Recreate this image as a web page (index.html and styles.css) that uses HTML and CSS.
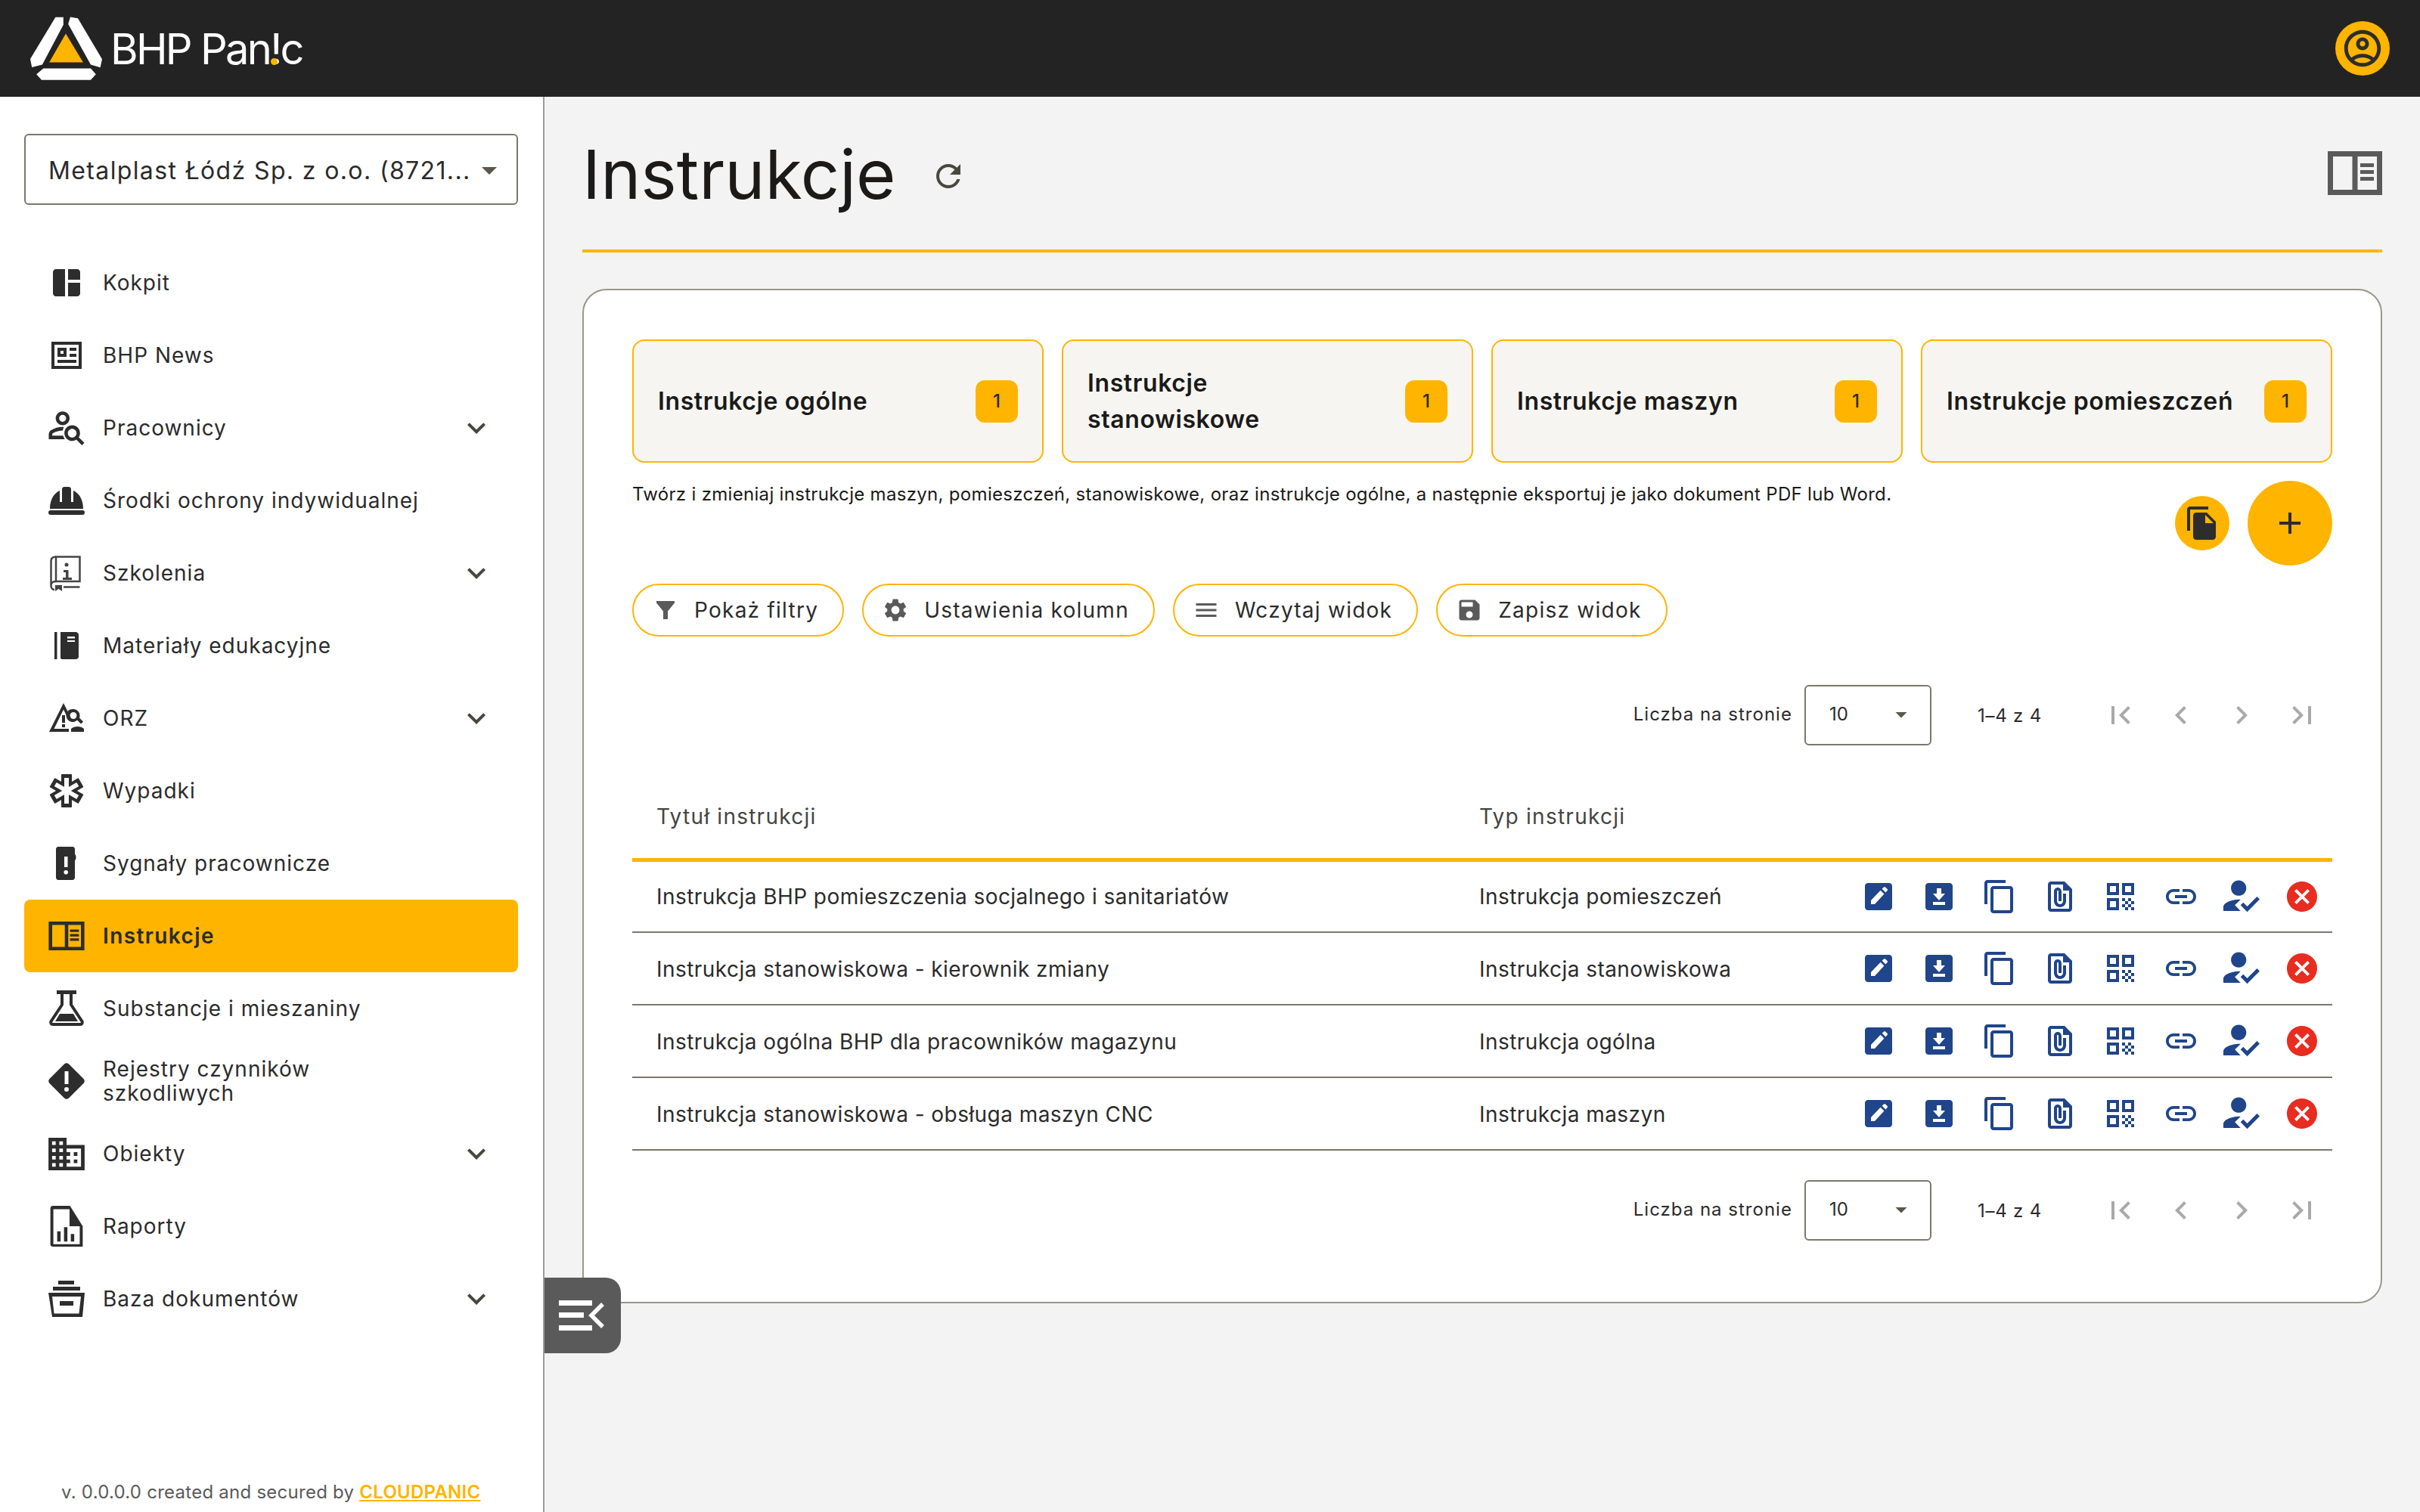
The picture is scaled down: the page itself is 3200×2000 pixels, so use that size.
FILE: index.html
```html
<!DOCTYPE html>
<html lang="pl">
  <head>
    <meta charset="UTF-8" />
    <meta name="viewport" content="width=device-width, initial-scale=1.0" />
    <title>BHP Panic - Instrukcje</title>
    <link rel="stylesheet" href="styles.css">
  </head>
  <body>
    <svg class="sprite" xmlns="http://www.w3.org/2000/svg">
      <symbol id="i-dashboard" viewBox="0 0 24 24"><path d="M11 21H5c-1.1 0-2-.9-2-2V5c0-1.1.9-2 2-2h6v18zm2 0h6c1.1 0 2-.9 2-2v-7h-8v9zm8-11V5c0-1.1-.9-2-2-2h-6v7h8z"/></symbol>
      <symbol id="i-news" viewBox="0 0 24 24"><path fill-rule="evenodd" d="M2 3h20v18H2zM4 5v14h16V5zM6 7h6v6H6zM8 9v2h2V9zM14 7h4.500v2H14zM14 11h4.500v2H14zM6 15h12.500v2H6z"/></symbol>
      <symbol id="i-person-search" viewBox="1.800 3.050 20.900 20.900"><path d="M4 18v-.65c0-.34.16-.66.41-.81C6.100 15.530 8.030 15 10 15c.03 0 .05 0 .08.01.1-.7.3-1.370.59-1.980-.22-.02-.44-.03-.67-.03-2.420 0-4.680.67-6.610 1.820-.88.52-1.390 1.500-1.390 2.530V20h9.260c-.42-.6-.75-1.280-.97-2H4z"/><path d="M10 12c2.210 0 4-1.790 4-4s-1.790-4-4-4-4 1.790-4 4 1.790 4 4 4zm0-6c1.100 0 2 .9 2 2s-.9 2-2 2-2-.9-2-2 .9-2 2-2z"/><path d="M19.300 18.900c.4-.7.7-1.500.7-2.400 0-2.500-2-4.500-4.500-4.500S11 14 11 16.500s2 4.500 4.500 4.500c.9 0 1.700-.3 2.400-.7l3.200 3.200 1.400-1.400-3.200-3.200zm-3.800.1c-1.400 0-2.500-1.100-2.500-2.500s1.100-2.500 2.500-2.500 2.500 1.100 2.500 2.500-1.100 2.500-2.500 2.500z"/></symbol>
      <symbol id="i-helmet" viewBox="0 0 24 24"><path d="M1 17.500C1 11 4 7 7.500 5.500V13h1.500V4.500C9 3.600 9.800 3 10.500 3h3c.7 0 1.500.6 1.500 1.500V13h1.500V5.500C20 7 23 11 23 17.500z"/><rect x="0" y="18.500" width="24" height="3" rx="1.500"/></symbol>
      <symbol id="i-book-info" viewBox="0 0 48 48"><g fill="none" stroke="currentColor" stroke-width="2.500"><path d="M10 2.500h31.500V35H10z"/><path d="M10 2.500C6 2.500 3.500 4.500 3.500 8v33c0 3 2 5 4.500 5"/><path d="M3.500 39c1-3 3-4 6.500-4M20 42.500h21.500"/></g><circle cx="24" cy="13" r="2.500"/><path d="M20 20h6.500v10H31v3H19v-3h4v-7h-3zM9 40h9v8l-4.500-3L9 48z"/></symbol>
      <symbol id="i-book" viewBox="0 0 48 48"><path d="M8 6h3.500v36H8z"/><path fill-rule="evenodd" d="M16 6h20c2 0 4 2 4 3.500V39c0 1.500-2 3-4 3H18c-1 0-2-1-2-2zM25 12v2.500h10V12zM25 17v2h10v-2z"/></symbol>
      <symbol id="i-orz" viewBox="0 0 48 48"><path fill-rule="evenodd" d="M20 4L1 42h26v-4H7.500L20 12.500l6 12.500 3.500-2zM18 20h4v10h-4zM18 32h4v4h-4z"/><path fill-rule="evenodd" d="M33 12a8.500 8.500 0 0 1 8 11.500l5 5-3 3-5-5A8.500 8.500 0 1 1 33 12zm0 4a4.500 4.500 0 1 0 0 9 4.500 4.500 0 0 0 0-9z"/><path d="M30 42h17v-4c-4-4-13-4-17 0z"/></symbol>
      <symbol id="i-star" viewBox="0 0 48 48"><g fill="#2d2d2d"><rect x="17" y="2" width="14" height="44" rx="1"/><rect x="17" y="2" width="14" height="44" rx="1" transform="rotate(60 24 24)"/><rect x="17" y="2" width="14" height="44" rx="1" transform="rotate(120 24 24)"/></g><g fill="#fff"><rect x="21" y="7" width="6" height="34"/><rect x="21" y="7" width="6" height="34" transform="rotate(60 24 24)"/><rect x="21" y="7" width="6" height="34" transform="rotate(120 24 24)"/></g></symbol>
      <symbol id="i-signal" viewBox="0 0 48 48"><path fill-rule="evenodd" d="M13 2h19c1.500 0 3 1.500 3 3v7c2 1 2 7 0 8v23c0 1.500-1.500 3-3 3H13c-1.500 0-3-1.500-3-3V5c0-1.500 1.500-3 3-3zM21 15v14h4.500V15zM23.200 33a2.800 2.800 0 1 0 0 5.600 2.800 2.800 0 0 0 0-5.600z"/></symbol>
      <symbol id="i-panel" viewBox="0 0 72 58"><path fill-rule="evenodd" d="M0 0h72v58H0zM7 7v44h25.500V7zM39.500 7v44H65V7zM43 16v5h18v-5zM43 25v5h18v-5zM43 34v5h18v-5z"/></symbol>
      <symbol id="i-flask" viewBox="0 0 48 48"><path d="M11 0h26v5H11z"/><path fill="none" stroke="currentColor" stroke-width="4" stroke-linejoin="round" d="M18 5v14L3.500 41c-1 2 0 4 2.500 4h36c2.500 0 3.500-2 2.500-4L30 19V5"/><path d="M15 31h18l6 10H9z"/></symbol>
      <symbol id="i-diamond" viewBox="0 0 48 48"><path fill-rule="evenodd" d="M21 1.500c1.700-1.700 4.300-1.700 6 0l19.500 19.500c1.700 1.700 1.700 4.300 0 6L27 46.500c-1.700 1.700-4.300 1.700-6 0L1.500 27c-1.700-1.700-1.700-4.300 0-6zM21.500 11v17h5V11zM24 32a3 3 0 1 0 0 6 3 3 0 0 0 0-6z"/></symbol>
      <symbol id="i-domain" viewBox="2 3 20 18"><path d="M12 7V3H2v18h20V7H12zM6 19H4v-2h2v2zm0-4H4v-2h2v2zm0-4H4V9h2v2zm0-4H4V5h2v2zm4 12H8v-2h2v2zm0-4H8v-2h2v2zm0-4H8V9h2v2zm0-4H8V5h2v2zm10 12h-8v-2h2v-2h-2v-2h2v-2h-2V9h8v10zm-2-8h-2v2h2v-2zm0 4h-2v2h2v-2z"/></symbol>
      <symbol id="i-report" viewBox="0 0 48 48"><path fill-rule="evenodd" d="M7 0h20l15 24v24H7c-2 0-3-1.500-3-3V3c0-1.500 1-3 3-3zM7.500 24v21h31V24h-12V4H7.500zM12 30h4v12h-4zM20 25h4v17h-4zM28 33h4v9h-4z" transform="translate(1 0)"/></symbol>
      <symbol id="i-archive" viewBox="0 0 48 48"><path d="M13 0h21v5H13zM6 8h36v5H6z"/><path fill-rule="evenodd" d="M0 16h48l-3 32H5zM5 21l2.500 22.500h33L43 21zM15 27h18v6H15z"/></symbol>
      <symbol id="i-expand" viewBox="0 0 24 24"><path d="M16.590 8.590L12 13.170 7.410 8.590 6 10l6 6 6-6z"/></symbol>
      <symbol id="i-drop" viewBox="0 0 24 24"><path d="M7 10l5 5 5-5z"/></symbol>
      <symbol id="i-account" viewBox="0 0 24 24"><path d="M12 2C6.480 2 2 6.480 2 12s4.480 10 10 10 10-4.480 10-10S17.520 2 12 2zM7.350 18.500C8.660 17.560 10.260 17 12 17s3.340.56 4.650 1.500C15.340 19.440 13.740 20 12 20s-3.340-.56-4.650-1.500zm10.790-1.380C16.450 15.800 14.320 15 12 15s-4.450.8-6.140 2.120C4.700 15.730 4 13.950 4 12c0-4.420 3.580-8 8-8s8 3.580 8 8c0 1.950-.7 3.730-1.860 5.120z"/><path d="M12 6c-1.930 0-3.500 1.570-3.500 3.500S10.070 13 12 13s3.500-1.570 3.500-3.500S13.930 6 12 6zm0 5c-.83 0-1.500-.67-1.500-1.500S11.170 8 12 8s1.500.67 1.500 1.500S12.830 11 12 11z"/></symbol>
      <symbol id="i-refresh" viewBox="0 0 24 24"><path d="M17.650 6.350C16.200 4.900 14.210 4 12 4c-4.420 0-7.990 3.580-7.990 8s3.570 8 7.990 8c3.730 0 6.840-2.550 7.730-6h-2.080c-.82 2.330-3.040 4-5.650 4-3.310 0-6-2.690-6-6s2.690-6 6-6c1.660 0 3.140.69 4.220 1.780L13 11h7V4l-2.350 2.350z"/></symbol>
      <symbol id="i-file-copy" viewBox="0 0 24 24"><path d="M16 1H4c-1.100 0-2 .9-2 2v14h2V3h12V1zm-1 4l6 6v10c0 1.100-.9 2-2 2H7.990C6.890 23 6 22.100 6 21l.01-14c0-1.100.89-2 1.990-2h7zm-1 7h5.500L14 6.500V12z"/></symbol>
      <symbol id="i-add" viewBox="0 0 24 24"><path d="M19 13h-6v6h-2v-6H5v-2h6V5h2v6h6v2z"/></symbol>
      <symbol id="i-filter" viewBox="0 0 24 24"><path d="M4 4h16v1.600L14 13v7h-4v-7L4 5.600z"/></symbol>
      <symbol id="i-gear" viewBox="0 0 24 24"><path d="M19.140 12.940c.04-.3.06-.61.06-.94 0-.32-.02-.64-.07-.94l2.030-1.580c.18-.14.23-.41.12-.61l-1.920-3.320c-.12-.22-.37-.29-.59-.22l-2.390.96c-.5-.38-1.030-.7-1.620-.94l-.36-2.540c-.04-.24-.24-.41-.48-.41h-3.840c-.24 0-.43.17-.47.41l-.36 2.540c-.59.24-1.130.57-1.620.94l-2.390-.96c-.22-.08-.47 0-.59.22L2.740 8.870c-.12.21-.08.47.12.61l2.030 1.580c-.05.3-.09.63-.09.94s.02.64.07.94l-2.030 1.580c-.18.14-.23.41-.12.61l1.920 3.320c.12.22.37.29.59.22l2.390-.96c.5.38 1.030.7 1.620.94l.36 2.540c.05.24.24.41.48.41h3.840c.24 0 .44-.17.47-.41l.36-2.540c.59-.24 1.130-.56 1.620-.94l2.390.96c.22.08.47 0 .59-.22l1.920-3.320c.12-.22.07-.47-.12-.61l-2.010-1.580zM12 15.600c-1.980 0-3.600-1.620-3.600-3.600s1.620-3.600 3.600-3.600 3.600 1.620 3.600 3.600-1.620 3.600-3.600 3.600z"/></symbol>
      <symbol id="i-menu" viewBox="0 0 24 24"><path d="M3 18h18v-2H3v2zm0-5h18v-2H3v2zm0-7v2h18V6H3z"/></symbol>
      <symbol id="i-save" viewBox="0 0 24 24"><path d="M17 3H5c-1.110 0-2 .9-2 2v14c0 1.100.89 2 2 2h14c1.100 0 2-.9 2-2V7l-4-4zm-5 16c-1.660 0-3-1.340-3-3s1.340-3 3-3 3 1.340 3 3-1.340 3-3 3zm3-10H5V5h10v4z"/></symbol>
      <symbol id="i-first" viewBox="0 0 24 24"><path d="M18.410 16.590L13.820 12l4.590-4.590L17 6l-6 6 6 6zM6 6h2v12H6z"/></symbol>
      <symbol id="i-prev" viewBox="0 0 24 24"><path d="M15.410 7.410L14 6l-6 6 6 6 1.410-1.410L10.830 12z"/></symbol>
      <symbol id="i-next" viewBox="0 0 24 24"><path d="M10 6L8.590 7.410 13.170 12l-4.580 4.590L10 18l6-6z"/></symbol>
      <symbol id="i-last" viewBox="0 0 24 24"><path d="M5.590 7.410L10.180 12l-4.590 4.590L7 18l6-6-6-6zM16 6h2v12h-2z"/></symbol>
      <symbol id="i-edit" viewBox="0 0 24 24"><path fill-rule="evenodd" d="M5 3h14c1.100 0 2 .9 2 2v14c0 1.100-.9 2-2 2H5c-1.100 0-2-.9-2-2V5c0-1.100.9-2 2-2zM7 14.500V17h2.500l6.200-6.800-2.400-2.300zM14.300 6.900l2.400 2.300 1.100-1.200c.3-.3.3-.7 0-1l-1.300-1.200c-.3-.3-.7-.3-1 0z"/></symbol>
      <symbol id="i-download" viewBox="0 0 24 24"><path fill-rule="evenodd" d="M5 3h14c1.100 0 2 .9 2 2v14c0 1.100-.9 2-2 2H5c-1.100 0-2-.9-2-2V5c0-1.100.9-2 2-2zM10.500 6.500V10H8l4 4.500 4-4.500h-2.500V6.500zM8 15.500V17.500h8v-2z"/></symbol>
      <symbol id="i-copy" viewBox="0 0 24 24"><path d="M16 1H4c-1.100 0-2 .9-2 2v14h2V3h12V1zm3 4H8c-1.100 0-2 .9-2 2v14c0 1.100.9 2 2 2h11c1.100 0 2-.9 2-2V7c0-1.100-.9-2-2-2zm0 16H8V7h11v14z"/></symbol>
      <symbol id="i-attach" viewBox="0 0 24 24"><path d="M15 2H6c-1.100 0-2 .9-2 2v16c0 1.100.9 2 2 2h12c1.100 0 2-.9 2-2V7l-5-5zM6 20V4h8v4h4v12H6zm10-10v5c0 2.210-1.790 4-4 4s-4-1.790-4-4V8.500c0-1.470 1.260-2.640 2.760-2.490 1.300.13 2.240 1.320 2.240 2.630V15h-2V8.500c0-.28-.22-.5-.5-.5s-.5.22-.5.5V15c0 1.100.9 2 2 2s2-.9 2-2v-5h2z"/></symbol>
      <symbol id="i-qr" viewBox="0 0 24 24"><path d="M3 11h8V3H3v8zm2-6h4v4H5V5zM3 21h8v-8H3v8zm2-6h4v4H5v-4zM13 3v8h8V3h-8zm6 6h-4V5h4v4zM13 13h2v2h-2zM15 15h2v2h-2zM13 17h2v2h-2zM15 19h2v2h-2zM17 17h2v2h-2zM17 13h2v2h-2zM19 15h2v2h-2zM19 19h2v2h-2z"/></symbol>
      <symbol id="i-link" viewBox="0 0 24 24"><path d="M3.900 12c0-1.710 1.390-3.100 3.100-3.100h4V7H7c-2.760 0-5 2.240-5 5s2.240 5 5 5h4v-1.900H7c-1.710 0-3.100-1.390-3.100-3.100zM8 13h8v-2H8v2zm9-6h-4v1.900h4c1.710 0 3.100 1.390 3.100 3.100s-1.390 3.100-3.100 3.100h-4V17h4c2.760 0 5-2.240 5-5s-2.240-5-5-5z"/></symbol>
      <symbol id="i-reg" viewBox="3 3 19 19"><path d="M9 17l3-2.940c-.39-.04-.68-.06-1-.06-2.670 0-8 1.340-8 4v2h9l-3-3zm2-5c2.210 0 4-1.790 4-4s-1.790-4-4-4-4 1.790-4 4 1.790 4 4 4z"/><path d="M15.470 20.500L12 17l1.400-1.410 2.070 2.080 5.130-5.170 1.400 1.410z"/></symbol>
      <symbol id="i-cancel" viewBox="0 0 24 24"><path d="M12 2C6.470 2 2 6.470 2 12s4.470 10 10 10 10-4.470 10-10S17.530 2 12 2zm5 13.590L15.590 17 12 13.410 8.410 17 7 15.590 10.590 12 7 8.410 8.410 7 12 10.590 15.590 7 17 8.410 13.410 12 17 15.590z"/></symbol>
    </svg>

    <header class="topbar">
      <a class="logo">
        <svg class="logo-mark" viewBox="0 0 95.400 84">
          <path fill="#fff" d="M44 .7H33.500L0 56l2.200 11L16 63.700 44 10.700zM50.400 9.700L53.200.3 63.300 2l32.100 54.300-2.400 11-12.700-3.600zM8.200 76.300l9.200-7.600h62.900l6.900 7.600-6.900 7.700H15z"/>
          <path fill="#ffb400" d="M47.200 22.300l23 38.400h-45z"/>
        </svg>
        <span class="logo-text">BHP Pan<span class="logo-bang">!</span>c</span>
      </a>
      <button class="avatar"><svg class="icon"><use href="#i-account"/></svg></button>
    </header>

    <div class="layout">
      <aside class="sidebar">
        <div class="company-select">
          <span class="company-name">Metalplast Łódź Sp. z o.o. (8721...</span>
          <svg class="icon drop"><use href="#i-drop"/></svg>
        </div>

        <nav class="nav">
          <a class="nav-item"><span class="nav-icon"><svg class="i48"><use href="#i-dashboard"/></svg></span><span class="nav-label">Kokpit</span></a>
          <a class="nav-item"><span class="nav-icon"><svg class="i48"><use href="#i-news"/></svg></span><span class="nav-label">BHP News</span></a>
          <a class="nav-item"><span class="nav-icon"><svg class="i48"><use href="#i-person-search"/></svg></span><span class="nav-label">Pracownicy</span><svg class="i48 chevron"><use href="#i-expand"/></svg></a>
          <a class="nav-item"><span class="nav-icon"><svg class="i48"><use href="#i-helmet"/></svg></span><span class="nav-label">Środki ochrony indywidualnej</span></a>
          <a class="nav-item"><span class="nav-icon"><svg class="i48 book-info"><use href="#i-book-info"/></svg></span><span class="nav-label">Szkolenia</span><svg class="i48 chevron"><use href="#i-expand"/></svg></a>
          <a class="nav-item"><span class="nav-icon"><svg class="i48"><use href="#i-book"/></svg></span><span class="nav-label">Materiały edukacyjne</span></a>
          <a class="nav-item"><span class="nav-icon"><svg class="i48"><use href="#i-orz"/></svg></span><span class="nav-label">ORZ</span><svg class="i48 chevron"><use href="#i-expand"/></svg></a>
          <a class="nav-item"><span class="nav-icon"><svg class="i48"><use href="#i-star"/></svg></span><span class="nav-label">Wypadki</span></a>
          <a class="nav-item"><span class="nav-icon"><svg class="i48"><use href="#i-signal"/></svg></span><span class="nav-label">Sygnały pracownicze</span></a>
          <a class="nav-item active"><span class="nav-icon"><svg class="i48 panel-small"><use href="#i-panel"/></svg></span><span class="nav-label">Instrukcje</span></a>
          <a class="nav-item"><span class="nav-icon"><svg class="i48"><use href="#i-flask"/></svg></span><span class="nav-label">Substancje i mieszaniny</span></a>
          <a class="nav-item"><span class="nav-icon"><svg class="i48"><use href="#i-diamond"/></svg></span><span class="nav-label">Rejestry czynników szkodliwych</span></a>
          <a class="nav-item"><span class="nav-icon"><svg class="i48 domain"><use href="#i-domain"/></svg></span><span class="nav-label">Obiekty</span><svg class="i48 chevron"><use href="#i-expand"/></svg></a>
          <a class="nav-item"><span class="nav-icon"><svg class="report"><use href="#i-report"/></svg></span><span class="nav-label">Raporty</span></a>
          <a class="nav-item"><span class="nav-icon"><svg class="i48"><use href="#i-archive"/></svg></span><span class="nav-label">Baza dokumentów</span><svg class="i48 chevron"><use href="#i-expand"/></svg></a>
        </nav>

        <p class="version">v. 0.0.0.0 created and secured by <a class="version-link">CLOUDPANIC</a></p>
      </aside>

      <main class="content">
        <div class="page-head">
          <h1 class="page-title">Instrukcje</h1>
          <svg class="i48 refresh"><use href="#i-refresh"/></svg>
          <svg class="panel-large"><use href="#i-panel"/></svg>
        </div>

        <section class="card">
          <div class="tiles">
            <div class="tile"><span class="tile-name">Instrukcje ogólne</span><span class="badge">1</span></div>
            <div class="tile"><span class="tile-name">Instrukcje stanowiskowe</span><span class="badge">1</span></div>
            <div class="tile"><span class="tile-name">Instrukcje maszyn</span><span class="badge">1</span></div>
            <div class="tile"><span class="tile-name">Instrukcje pomieszczeń</span><span class="badge">1</span></div>
          </div>

          <div class="intro">
            <p class="intro-text">Twórz i zmieniaj instrukcje maszyn, pomieszczeń, stanowiskowe, oraz instrukcje ogólne, a następnie eksportuj je jako dokument PDF lub Word.</p>
            <div class="fabs">
              <button class="fab fab-small"><svg class="i48"><use href="#i-file-copy"/></svg></button>
              <button class="fab fab-large"><svg class="i48"><use href="#i-add"/></svg></button>
            </div>
          </div>

          <div class="toolbar">
            <button class="pill"><svg class="i36"><use href="#i-filter"/></svg>Pokaż filtry</button>
            <button class="pill"><svg class="i36"><use href="#i-gear"/></svg>Ustawienia kolumn</button>
            <button class="pill"><svg class="i36"><use href="#i-menu"/></svg>Wczytaj widok</button>
            <button class="pill"><svg class="i36"><use href="#i-save"/></svg>Zapisz widok</button>
          </div>

          <div class="pager">
            <span class="pager-label">Liczba na stronie</span>
            <div class="pager-select"><span>10</span><svg class="i36"><use href="#i-drop"/></svg></div>
            <span class="pager-range">1–4 z 4</span>
            <span class="pager-btn"><svg class="i48"><use href="#i-first"/></svg></span>
            <span class="pager-btn"><svg class="i48"><use href="#i-prev"/></svg></span>
            <span class="pager-btn"><svg class="i48"><use href="#i-next"/></svg></span>
            <span class="pager-btn"><svg class="i48"><use href="#i-last"/></svg></span>
          </div>

          <table class="grid">
            <colgroup><col class="col-title"><col class="col-type"><col></colgroup>
            <thead>
              <tr><th>Tytuł instrukcji</th><th>Typ instrukcji</th><th></th></tr>
            </thead>
            <tbody>
              <tr>
                <td>Instrukcja BHP pomieszczenia socjalnego i sanitariatów</td>
                <td>Instrukcja pomieszczeń</td>
                <td><div class="actions"><svg class="i48"><use href="#i-edit"/></svg><svg class="i48"><use href="#i-download"/></svg><svg class="i48"><use href="#i-copy"/></svg><svg class="i48"><use href="#i-attach"/></svg><svg class="i48"><use href="#i-qr"/></svg><svg class="i48"><use href="#i-link"/></svg><svg class="i48"><use href="#i-reg"/></svg><svg class="i48 danger"><use href="#i-cancel"/></svg></div></td>
              </tr>
              <tr>
                <td>Instrukcja stanowiskowa - kierownik zmiany</td>
                <td>Instrukcja stanowiskowa</td>
                <td><div class="actions"><svg class="i48"><use href="#i-edit"/></svg><svg class="i48"><use href="#i-download"/></svg><svg class="i48"><use href="#i-copy"/></svg><svg class="i48"><use href="#i-attach"/></svg><svg class="i48"><use href="#i-qr"/></svg><svg class="i48"><use href="#i-link"/></svg><svg class="i48"><use href="#i-reg"/></svg><svg class="i48 danger"><use href="#i-cancel"/></svg></div></td>
              </tr>
              <tr>
                <td>Instrukcja ogólna BHP dla pracowników magazynu</td>
                <td>Instrukcja ogólna</td>
                <td><div class="actions"><svg class="i48"><use href="#i-edit"/></svg><svg class="i48"><use href="#i-download"/></svg><svg class="i48"><use href="#i-copy"/></svg><svg class="i48"><use href="#i-attach"/></svg><svg class="i48"><use href="#i-qr"/></svg><svg class="i48"><use href="#i-link"/></svg><svg class="i48"><use href="#i-reg"/></svg><svg class="i48 danger"><use href="#i-cancel"/></svg></div></td>
              </tr>
              <tr>
                <td>Instrukcja stanowiskowa - obsługa maszyn CNC</td>
                <td>Instrukcja maszyn</td>
                <td><div class="actions"><svg class="i48"><use href="#i-edit"/></svg><svg class="i48"><use href="#i-download"/></svg><svg class="i48"><use href="#i-copy"/></svg><svg class="i48"><use href="#i-attach"/></svg><svg class="i48"><use href="#i-qr"/></svg><svg class="i48"><use href="#i-link"/></svg><svg class="i48"><use href="#i-reg"/></svg><svg class="i48 danger"><use href="#i-cancel"/></svg></div></td>
              </tr>
            </tbody>
          </table>

          <div class="pager pager-bottom">
            <span class="pager-label">Liczba na stronie</span>
            <div class="pager-select"><span>10</span><svg class="i36"><use href="#i-drop"/></svg></div>
            <span class="pager-range">1–4 z 4</span>
            <span class="pager-btn"><svg class="i48"><use href="#i-first"/></svg></span>
            <span class="pager-btn"><svg class="i48"><use href="#i-prev"/></svg></span>
            <span class="pager-btn"><svg class="i48"><use href="#i-next"/></svg></span>
            <span class="pager-btn"><svg class="i48"><use href="#i-last"/></svg></span>
          </div>
        </section>

        <button class="side-toggle">
          <svg viewBox="0 0 60 40"><path fill="#fff" d="M0 0h44v7H0zM0 16h33v7H0zM0 33h44v7H0z"/><path fill="none" stroke="#fff" stroke-width="5.500" d="M58 5L43 20l15 15"/></svg>
        </button>
      </main>
    </div>
  </body>
</html>
```

FILE: styles.css
```css
* {
  box-sizing: border-box;
}

body {
  margin: 0;
  height: 2000px;
  display: flex;
  flex-direction: column;
  overflow: hidden;
  font-family: "Inter", "Noto Sans", sans-serif;
  color: #2b2b2b;
  background: #f3f3f3;
}

.sprite {
  display: none;
}

svg {
  fill: currentColor;
  flex: none;
  display: block;
}

.i48 {
  width: 48px;
  height: 48px;
}
.i36 {
  width: 36px;
  height: 36px;
}

button {
  font: inherit;
  color: inherit;
  background: none;
  border: 0;
  padding: 0;
}

/* top bar */
.topbar {
  height: 128px;
  flex: none;
  background: #232323;
  display: flex;
  align-items: center;
  justify-content: space-between;
  padding: 0 40px;
}
.logo {
  display: flex;
  align-items: center;
  gap: 11px;
}
.logo-mark {
  width: 95px;
  height: 84px;
}
.logo-text {
  color: #fff;
  font-size: 56px;
  font-weight: 400;
  letter-spacing: -2.7px;
  line-height: 64px;
  padding-top: 2px;
}
.logo-bang {
  position: relative;
}
.logo-bang::after {
  content: "";
  position: absolute;
  left: 50%;
  bottom: 13px;
  width: 9px;
  height: 9px;
  margin-left: -6px;
  border-radius: 50%;
  background: #ffb400;
}
.avatar {
  width: 72px;
  height: 72px;
  border-radius: 50%;
  background: #ffb400;
  color: #2d2d2d;
  display: flex;
  align-items: center;
  justify-content: center;
}
.avatar .icon {
  width: 58px;
  height: 58px;
}

.layout {
  flex: 1;
  display: flex;
  min-height: 0;
}

/* sidebar */
.sidebar {
  width: 720px;
  flex: none;
  background: #fff;
  border-right: 2px solid #9b9b9b;
  padding: 49px 33px 0 32px;
  display: flex;
  flex-direction: column;
}
.company-select {
  height: 94px;
  border: 2px solid #7b776b;
  border-radius: 6px;
  display: flex;
  align-items: center;
  justify-content: space-between;
  padding: 2px 30px 0 30px;
  font-size: 32px;
  letter-spacing: 1.37px;
}
.company-name {
  white-space: nowrap;
}
.company-select .drop {
  width: 48px;
  height: 48px;
  color: #5a564a;
}
.nav {
  margin-top: 55px;
  display: flex;
  flex-direction: column;
}
.nav-item {
  height: 96px;
  padding: 0 32px;
  display: flex;
  align-items: center;
  border-radius: 8px;
  font-size: 28px;
  letter-spacing: 1px;
  line-height: 32px;
}
.nav-item.active {
  background: #ffb400;
  font-weight: 600;
  letter-spacing: 1.4px;
}
.nav-icon {
  width: 48px;
  height: 48px;
  margin-right: 24px;
  flex: none;
  display: flex;
  align-items: center;
  justify-content: center;
  color: #2d2d2d;
}
.nav-label {
  max-width: 430px;
}
.chevron {
  margin-left: auto;
  margin-right: -1px;
  color: #4a463e;
}
.panel-small {
  height: 38px;
}
.book-info {
  color: #444;
}
.domain {
  height: 43px;
}
.report {
  width: 54px;
  height: 54px;
}
.version {
  margin: auto 0 10px;
  padding-left: 49px;
  font-size: 24px;
  line-height: 32px;
  letter-spacing: .25px;
  color: #5a5a5a;
  white-space: nowrap;
}
.version-link {
  color: #ffb400;
  font-weight: 600;
  text-decoration: underline;
}

/* main */
.content {
  flex: 1;
  min-width: 0;
  padding: 0 50px;
  position: relative;
}
.page-head {
  height: 206px;
  border-bottom: 4px solid #ffb400;
  display: flex;
  align-items: center;
  padding-top: 4px;
}
.page-title {
  margin: 0;
  font-size: 90px;
  font-weight: 400;
  line-height: 112px;
  color: #1b1a18;
}
.refresh {
  margin: 3px 0 0 46px;
  color: #4a463e;
}
.panel-large {
  margin-left: auto;
  margin-top: -4px;
  width: 72px;
  height: 58px;
  color: #5a5a5a;
}

.card {
  margin-top: 48px;
  height: 1342px;
  background: #fff;
  border: 2px solid #9a968a;
  border-radius: 32px;
  padding: 65px 64px 0;
}
.tiles {
  display: grid;
  grid-template-columns: repeat(4, 1fr);
  gap: 24px;
}
.tile {
  height: 163px;
  background: #f6f5f2;
  border: 2px solid #ffb400;
  border-radius: 16px;
  padding: 0 32px;
  display: flex;
  align-items: center;
  justify-content: space-between;
  gap: 32px;
}
.tile-name {
  font-size: 32px;
  font-weight: 600;
  line-height: 48px;
  letter-spacing: .6px;
  color: #1b1a18;
}
.badge {
  width: 56px;
  height: 56px;
  flex: none;
  border-radius: 12px;
  background: #ffb400;
  font-size: 24px;
  font-weight: 500;
  display: flex;
  align-items: center;
  justify-content: center;
}
.intro {
  margin-top: 24px;
  display: flex;
  justify-content: space-between;
  align-items: flex-start;
}
.intro-text {
  margin: 0;
  font-size: 24px;
  line-height: 36px;
  letter-spacing: .31px;
  color: #1b1a18;
}
.fabs {
  display: flex;
  align-items: center;
  gap: 24px;
}
.fab {
  border-radius: 50%;
  background: #ffb400;
  color: #2d2d2d;
  display: flex;
  align-items: center;
  justify-content: center;
}
.fab-small {
  width: 72px;
  height: 72px;
}
.fab-large {
  width: 112px;
  height: 112px;
}

.toolbar {
  margin-top: 24px;
  display: flex;
  gap: 24px;
}
.pill {
  height: 70px;
  border: 2px solid #ffb400;
  border-radius: 35px;
  padding: 0 32px 0 24px;
  display: flex;
  align-items: center;
  gap: 20px;
  font-size: 28px;
  font-weight: 400;
  letter-spacing: 1.25px;
}
.pill svg {
  color: #5a5a5a;
}

.pager {
  margin-top: 64px;
  height: 80px;
  display: flex;
  align-items: center;
  justify-content: flex-end;
  font-size: 24px;
}
.pager-bottom {
  margin-top: 39px;
}
.pager-label {
  letter-spacing: 1px;
  margin-right: 16px;
  padding-bottom: 3px;
}
.pager-select {
  width: 168px;
  height: 80px;
  border: 2px solid #7b776b;
  border-radius: 6px;
  padding: 0 20px 3px 31px;
  display: flex;
  align-items: center;
  justify-content: space-between;
}
.pager-select svg {
  color: #5a564a;
}
.pager-range {
  margin: 0 64px 0 61px;
  letter-spacing: .8px;
}
.pager-btn {
  width: 80px;
  height: 80px;
  display: flex;
  align-items: center;
  justify-content: center;
  color: #a9a9a9;
}

.grid {
  width: 100%;
  margin-top: 40px;
  table-layout: fixed;
  border-collapse: collapse;
}
.col-title {
  width: 1088px;
}
.col-type {
  width: 500px;
}
.grid th {
  height: 111px;
  padding: 0 32px;
  text-align: left;
  font-size: 28px;
  font-weight: 400;
  letter-spacing: 1.25px;
  color: #444;
  border-bottom: 5px solid #ffb400;
}
.grid td {
  height: 96px;
  padding: 1px 32px 0;
  font-size: 28px;
  letter-spacing: .45px;
  color: #2b2b2b;
  border-bottom: 2px solid #7b776b;
  white-space: nowrap;
}
.grid td:last-child {
  padding: 0;
}
.actions {
  display: flex;
  justify-content: flex-end;
  padding-right: 16px;
  gap: 32px;
  color: #20458a;
}
.actions .danger {
  color: #e82c1f;
}

.side-toggle {
  position: absolute;
  left: 0;
  top: 1562px;
  width: 101px;
  height: 100px;
  padding-left: 19px;
  background: #5a5a5a;
  border-radius: 0 20px 20px 0;
  display: flex;
  align-items: center;
}
.side-toggle svg {
  width: 60px;
  height: 40px;
}
```
